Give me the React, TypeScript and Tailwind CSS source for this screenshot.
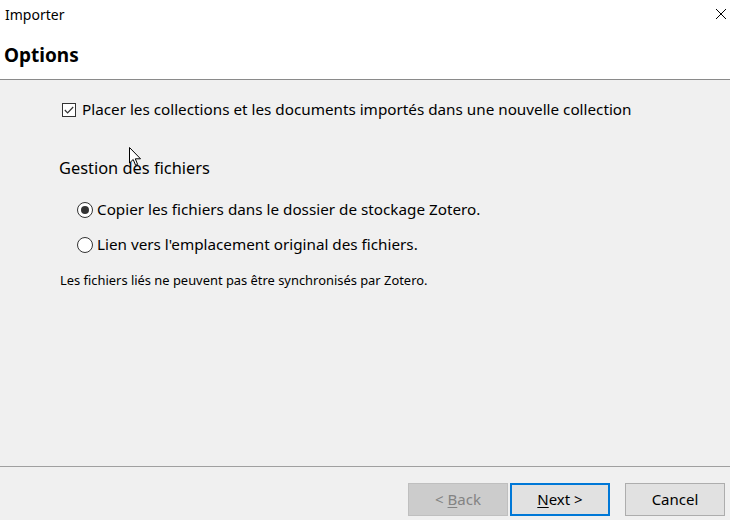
import React from "react";

function Cursor() {
  return (
    <svg width="13" height="20" viewBox="0 0 13 20" className="absolute left-[129px] top-[147px]">
      <path d="M0.5 0.5 L0.5 16 L4.2 12.5 L6.6 18.3 L8.6 17.4 L6.3 11.8 L11.5 11.8 Z" fill="#fff" stroke="#000" strokeWidth="1" />
    </svg>
  );
}

export default function App() {
  return (
    <div
      className="relative w-[730px] h-[520px] flex flex-col bg-[#f0f0f0] text-black overflow-hidden"
      style={{ fontFamily: '"Noto Sans", "Open Sans", sans-serif' }}
    >
      {/* header */}
      <div className="bg-white h-[80px] border-b border-[#8a8a8a] flex flex-col">
        <div className="flex items-center justify-between h-[30px] pl-[5px] pr-[3px]">
          <span className="text-[14px] leading-none">Importer</span>
          <svg width="12" height="12" viewBox="0 0 12 12" className="mb-[2px]">
            <path d="M1 1 L11 11 M11 1 L1 11" stroke="#000" strokeWidth="1" />
          </svg>
        </div>
        <h1 className="pl-[4px] mt-[16px] text-[19px] font-bold leading-none">Options</h1>
      </div>

      {/* body */}
      <div className="flex-1 flex flex-col pt-[22px]">
        <label className="flex items-center ml-[62px] h-[16px]">
          <span className="w-[14px] h-[14px] border border-[#333] bg-white flex items-center justify-center">
            <svg width="10" height="8" viewBox="0 0 10 8">
              <path d="M0.8 4 L3.6 6.8 L9.2 1" fill="none" stroke="#333" strokeWidth="1.2" />
            </svg>
          </span>
          <span className="ml-[6px] text-[15.25px] leading-none">
            Placer les collections et les documents importés dans une nouvelle collection
          </span>
        </label>

        <h2 className="ml-[59px] mt-[42px] text-[16.4px] leading-none">Gestion des fichiers</h2>

        <div className="ml-[77px] mt-[25px] flex flex-col gap-[18px]">
          <label className="flex items-center h-[17px]">
            <span className="w-[16px] h-[16px] rounded-full border border-[#333] bg-white flex items-center justify-center">
              <span className="w-[8px] h-[8px] rounded-full bg-[#333]" />
            </span>
            <span className="ml-[4px] text-[15.25px] leading-none">Copier les fichiers dans le dossier de stockage Zotero.</span>
          </label>
          <label className="flex items-center h-[17px]">
            <span className="w-[16px] h-[16px] rounded-full border border-[#333] bg-white" />
            <span className="ml-[4px] text-[15.25px] leading-none">Lien vers l'emplacement original des fichiers.</span>
          </label>
        </div>

        <p className="ml-[60px] mt-[21px] text-[12.9px] leading-none">
          Les fichiers liés ne peuvent pas être synchronisés par Zotero.
        </p>
      </div>

      {/* footer */}
      <div className="h-[54px] border-t border-[#a0a0a0] flex items-start justify-end pt-[16px] pr-[5px]">
        <button className="w-[100px] h-[33px] border border-[#bfbfbf] bg-[#cccccc] text-[#838383] text-[15px]">
          &lt; <span className="underline underline-offset-2">B</span>ack
        </button>
        <button className="ml-[2px] w-[100px] h-[33px] border-2 border-[#0078d7] bg-[#e1e1e1] text-[15px]">
          <span className="underline underline-offset-2">N</span>ext &gt;
        </button>
        <button className="ml-[15px] w-[100px] h-[33px] border border-[#adadad] bg-[#e1e1e1] text-[15px]">
          Cancel
        </button>
      </div>

      <Cursor />
    </div>
  );
}
